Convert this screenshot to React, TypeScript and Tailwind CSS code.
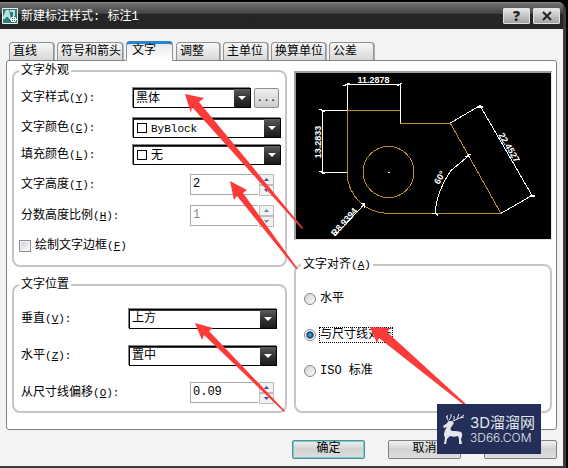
import { useState, type ReactNode } from "react";
import clsx from "clsx";

const TABS = [
  { label: "直线", width: "w-[45px]" },
  { label: "符号和箭头", width: "w-[66px]" },
  { label: "文字", width: "w-[47px]" },
  { label: "调整", width: "w-[44px]" },
  { label: "主单位", width: "w-[45px]" },
  { label: "换算单位", width: "w-[55px]" },
  { label: "公差", width: "w-[45px]" },
];

const ALIGNMENTS = ["水平", "与尺寸线对齐", "ISO 标准"];

function Mnemonic({ letter, colon = true }: { letter: string; colon?: boolean }) {
  return (
    <span className="text-[11px]">
      (<span className="underline">{letter}</span>){colon && ":"}
    </span>
  );
}

function Group({ title, className, children }: { title: ReactNode; className?: string; children: ReactNode }) {
  return (
    <fieldset className={clsx("min-w-0 rounded-lg border-2 border-[#c6c6c6]", className)}>
      <legend className="ml-[5px] px-[2px] leading-4">{title}</legend>
      {children}
    </fieldset>
  );
}

type RowProps = { id: string; text: string; letter: string; height: string; labelWidth: string; children: ReactNode };

function Row({ id, text, letter, height, labelWidth, children }: RowProps) {
  return (
    <div className={clsx("flex items-center pl-[7px] pr-1", height)}>
      <label htmlFor={id} className={clsx("shrink-0 whitespace-nowrap", labelWidth)}>
        {text}
        <Mnemonic letter={letter} />
      </label>
      {children}
    </div>
  );
}

function Combo({ id, options, swatch, className }: { id: string; options: string[]; swatch?: boolean; className?: string }) {
  return (
    <div
      className={clsx(
        "flex h-5 items-stretch border border-black bg-white shadow-[-1px_-1px_0_#80858a,inset_0_1px_0_#333]",
        className
      )}
    >
      {swatch && <span className="ml-[3px] h-[10px] w-[10px] shrink-0 self-center border border-black" />}
      <select
        id={id}
        className={clsx("min-w-0 flex-1 appearance-none bg-transparent pt-px outline-none", swatch ? "pl-1" : "pl-[2px]")}
      >
        {options.map((o) => (
          <option key={o}>{o}</option>
        ))}
      </select>
      <span className="flex w-4 shrink-0 items-center justify-center bg-linear-to-b from-[#5c5c5c] via-[#333] to-[#1c1c1c]">
        <svg width="8" height="4" viewBox="0 0 8 4">
          <path d="M0 0h8L4 4z" fill="#fff" />
        </svg>
      </span>
    </div>
  );
}

function Spinner({ id, initial, disabled }: { id: string; initial: string; disabled?: boolean }) {
  const [value, setValue] = useState(initial);
  const step = (d: number) => setValue((v) => String(Math.max(0, Number(v) + d)));
  const button = "flex h-[11px] w-[15px] items-center justify-center border border-[#bcbcbc] bg-[#f1f1f1]";
  const arrow = disabled ? "#7d8190" : "#3d4d8c";

  return (
    <div className="flex">
      <input
        id={id}
        value={value}
        disabled={disabled}
        onChange={(e) => setValue(e.target.value)}
        className="h-[21px] w-[68px] border border-r-0 border-[#a9a9a9] bg-white pb-px pl-[2px] text-[12px] outline-none disabled:text-[#8a8a8a]"
      />
      <div className="ml-px flex flex-col">
        <button type="button" aria-label="增加" disabled={disabled} onClick={() => step(1)} className={button}>
          <svg width="5" height="3" viewBox="0 0 5 3">
            <path d="M0 3h5L2.500 0z" fill={arrow} />
          </svg>
        </button>
        <button type="button" aria-label="减少" disabled={disabled} onClick={() => step(-1)} className={button}>
          <svg width="5" height="3" viewBox="0 0 5 3">
            <path d="M0 0h5L2.500 3z" fill={arrow} />
          </svg>
        </button>
      </div>
    </div>
  );
}

function Preview() {
  return (
    <div className="mt-2 border-2 border-r border-b border-[#9c9c9c] border-r-[#e4e4e4] border-b-[#e8dede] bg-black">
      <svg viewBox="296 73 254 166" className="block h-[166px] w-full" fill="none">
        {/* part outline */}
        <g stroke="#b8902c" shapeRendering="crispEdges">
          <path d="M346.500 172V110.500H399.500V123.500H450L500.500 213.500H388C365 213 347 196 346.500 172" />
          <circle cx="388" cy="172" r="25.500" />
        </g>
        {/* dimension lines */}
        <g stroke="#fff" shapeRendering="crispEdges">
          <path d="M346.500 110V84.500H399.500V123M346 110.500H321.500V172.500H346" />
          <path d="M343 86l6 -3M397 86l4 -3M319 109l5 3M319 171l5 3" strokeWidth="1.500" />
          <path d="M450 123L479.500 105.500L531.500 195.500L501 213" />
          <path d="M476 107h6M529 196h5" strokeWidth="2" />
          <path d="M468 156L450 171Q436 192 434.500 213M465 157l5 -3M468 154l1 4M431 213h5l1 3" />
          <path d="M334 236L364 204M361 203l3 1v4" />
          <path d="M387 172h2" />
        </g>
        <g
          fill="#fff"
          textAnchor="middle"
          className="[font-family:'Liberation_Sans',sans-serif] text-[9px] font-bold"
        >
          <text x="373" y="83">11.2878</text>
          <text transform="translate(320 142) rotate(-90)">13.2833</text>
          <text transform="translate(506 149) rotate(60)">22.4527</text>
          <text transform="translate(442 179) rotate(-60)">60°</text>
          <text transform="translate(346 224) rotate(-48)">R8.9394</text>
        </g>
      </svg>
    </div>
  );
}

function Arrows() {
  return (
    <svg className="pointer-events-none absolute top-0 left-0" width="568" height="468" viewBox="0 0 568 468">
      <g fill="#fb3b3a">
        <path d="M185 94L204 98L199 102L303 228L302 229L192 107L191 113Z" />
        <path d="M230 181L247 190L243 193L298 269L296 269L237 196L234 200Z" />
        <path d="M195 323L213 328L209 331L285 411L284 412L204 335L202 340Z" />
        <path d="M370 327L390 328L387 332L467 405L464 405L379 338L377 343Z" />
      </g>
    </svg>
  );
}

function Watermark() {
  return (
    <div className="absolute top-[404px] left-[437px] flex h-[50px] w-[104px] items-center gap-[5px] bg-[#232f59] pl-[5px] text-[#e4e6ec]">
      <svg width="23" height="32" viewBox="0 0 23 32">
        <path
          d="M1 13L4 11L6 9C6 8 7 8 9 8L12 10L10 13C8 15 8 17 10 18C14 18 17 18 19 19C21 21 20 24 19 26L20 31H17V26L16 23C13 24 11 24 8 23L5 26L4 31H2L3 25L2 22C2 19 3 17 5 14L2 15Z"
          fill="currentColor"
        />
        <path
          d="M8 9C5 7 4 4 6 2M6 5L4 3M7 7L9 4V1M9 9C13 7 17 6 22 2M12 7L12 3M15 6L17 1M18 5L22 4"
          fill="none"
          stroke="currentColor"
        />
      </svg>
      <div className="whitespace-nowrap [font-family:Inter,'Noto_Sans_CJK_SC',sans-serif]">
        <div className="text-[15px] leading-[17px]">3D溜溜网</div>
        <div className="text-[12px] leading-[13px] font-light">3D66.COM</div>
      </div>
    </div>
  );
}

export default function App() {
  const [tab, setTab] = useState("文字");
  const [alignment, setAlignment] = useState("与尺寸线对齐");

  const titleButton =
    "flex h-4 w-[27px] items-center justify-center rounded-[1px] border border-[#e2e2e2] bg-linear-to-b from-[#e6e6e6] to-[#a2a2a2]";
  const footerButton =
    "h-[19px] w-[73px] rounded-[2px] border bg-linear-to-b from-[#f0f0f0] via-[#d2d2d2] to-[#dedede] leading-[17px]";

  return (
    <div className="relative bg-black pt-[2px] pr-[2px] text-[12px] leading-4 text-black [font-family:'Liberation_Mono','Noto_Sans_CJK_SC',monospace]">
      <div className="rounded-t-lg rounded-l-none border-r-[3px] border-b-2 border-[#3c3c3c] bg-[#f3f3f3]">
        <header className="flex h-[27px] items-center rounded-tr-[5px] border-t border-[#8b8b8b] bg-linear-to-b from-[#707070] from-0% via-[#454545] via-40% to-[#252525] to-42% pr-[3px] pl-[2px] text-white">
          <svg width="16" height="16" viewBox="0 0 16 16" fill="none">
            <path d="M.5 .5h15v15H.5z" fill="#2c7d78" stroke="#e6f3f2" />
            <path d="M1 9l3-7h3l2 9H7L6 9H4l-1 2H1zM8 2h5v6h-2V4H8z" fill="#b9e2dc" />
            <path d="M11.500 8v6M8 11.500h7M9.500 9.500h4v4h-4z" stroke="#fff" />
          </svg>
          <h1 className="ml-[3px] flex-1 pt-px">新建标注样式: 标注1</h1>
          <div className="flex gap-[3px]">
            <button type="button" aria-label="帮助" className={titleButton}>
              <span className="font-sans text-[14px] leading-none font-black text-[#222]">?</span>
            </button>
            <button type="button" aria-label="关闭" className={titleButton}>
              <svg width="10" height="10" viewBox="0 0 10 10">
                <path d="M1 1l8 8M9 1L1 9" stroke="#222" strokeWidth="2" />
              </svg>
            </button>
          </div>
        </header>

        <main className="pt-3 pr-[6px] pb-[7px]">
          <div role="tablist" className="flex items-end gap-[3px] pl-[9px]">
            {TABS.map((t) => (
              <button
                key={t.label}
                type="button"
                role="tab"
                aria-selected={tab === t.label}
                onClick={() => setTab(t.label)}
                className={clsx(
                  "shrink-0 rounded-t-[4px] border text-left whitespace-nowrap",
                  t.width,
                  tab === t.label
                    ? "-mb-px h-5 border-t-[3px] border-[#8d9296] border-t-[#2a86cc] border-b-white bg-linear-to-b from-[#e8e8e8] to-white pb-[3px] pl-[5px] leading-3"
                    : "h-[18px] border-b-0 border-[#8d9296] bg-linear-to-b from-[#f8f8f8] to-[#d8d8d8] pl-[3px] shadow-[1px_0_0_#b0b0b0]"
                )}
              >
                {t.label}
              </button>
            ))}
          </div>

          <div className="ml-[6px] rounded-[3px] border border-[#7c838b] bg-white pt-[2px] pr-1 pb-4 pl-[5px]">
            <div className="grid grid-cols-[275px_1fr] gap-[7px]">
              <div className="flex flex-col gap-[10px]">
                <Group title="文字外观" className="pb-[2px]">
                  <div className="pt-1">
                    <Row id="style" text="文字样式" letter="Y" height="h-[30px]" labelWidth="w-28">
                      <Combo id="style" options={["黑体"]} className="w-[118px]" />
                      <button
                        type="button"
                        aria-label="浏览文字样式"
                        className="ml-[3px] h-5 w-[25px] rounded-[2px] border border-[#8e8e8e] bg-linear-to-b from-[#efefef] to-[#cdcdcd] text-[11px] leading-none"
                      >
                        ...
                      </button>
                    </Row>
                    <Row id="color" text="文字颜色" letter="C" height="h-[30px]" labelWidth="w-28">
                      <Combo id="color" options={["ByBlock"]} swatch className="flex-1 text-[11px]" />
                    </Row>
                    <Row id="fill" text="填充颜色" letter="L" height="h-6" labelWidth="w-28">
                      <Combo id="fill" options={["无"]} swatch className="flex-1" />
                    </Row>
                    <Row id="height" text="文字高度" letter="T" height="h-9" labelWidth="w-[169px]">
                      <Spinner id="height" initial="2" />
                    </Row>
                    <Row id="fraction" text="分数高度比例" letter="H" height="h-[26px]" labelWidth="w-[169px]">
                      <Spinner id="fraction" initial="1" disabled />
                    </Row>
                    <label className="flex h-[34px] items-center gap-1 pl-[5px]">
                      <input
                        type="checkbox"
                        className="h-3 w-3 appearance-none border border-[#8a8f94] bg-linear-to-br from-[#c9cdd1] to-white shadow-[inset_0_0_0_1px_#f4f4f4] checked:bg-[#2a6a9c]"
                      />
                      <span>
                        绘制文字边框
                        <Mnemonic letter="F" colon={false} />
                      </span>
                    </label>
                  </div>
                </Group>

                <Group title="文字位置">
                  <div className="pt-[7px]">
                    <Row id="vertical" text="垂直" letter="V" height="h-[37px]" labelWidth="w-[108px]">
                      <Combo id="vertical" options={["上方", "居中", "外部", "下方"]} className="w-[148px]" />
                    </Row>
                    <Row id="horizontal" text="水平" letter="Z" height="h-[37px]" labelWidth="w-[108px]">
                      <Combo id="horizontal" options={["置中"]} className="w-[148px]" />
                    </Row>
                    <Row id="offset" text="从尺寸线偏移" letter="O" height="h-[37px]" labelWidth="w-[169px]">
                      <Spinner id="offset" initial="0.09" />
                    </Row>
                  </div>
                </Group>
              </div>

              <div className="flex min-w-0 flex-col">
                <Preview />
                <Group
                  title={
                    <>
                      文字对齐
                      <Mnemonic letter="A" colon={false} />
                    </>
                  }
                  className="mt-[17px] flex-1"
                >
                  <div className="pt-2 pl-2">
                    {ALIGNMENTS.map((a) => (
                      <label key={a} className="flex h-9 items-center gap-1">
                        <input
                          type="radio"
                          name="alignment"
                          checked={alignment === a}
                          onChange={() => setAlignment(a)}
                          className="h-3 w-3 appearance-none rounded-full border border-[#858585] bg-linear-to-br from-[#cfcfcf] to-white checked:bg-radial checked:from-[#3f9fd0] checked:from-10% checked:via-[#14406c] checked:via-45% checked:to-white checked:to-60%"
                        />
                        <span
                          className={clsx("leading-[14px]", alignment === a && "outline-1 outline-black outline-dotted")}
                        >
                          {a}
                        </span>
                      </label>
                    ))}
                  </div>
                </Group>
              </div>
            </div>
          </div>

          <footer className="flex justify-end gap-[23px] pt-[10px]">
            <button type="button" className={clsx(footerButton, "border-[#5a8a90] shadow-[inset_0_0_0_1px_#6fd0d8]")}>
              确定
            </button>
            <button type="button" className={clsx(footerButton, "border-[#808080]")}>
              取消
            </button>
            <button type="button" className={clsx(footerButton, "border-[#808080]")}>
              帮助
              <Mnemonic letter="H" colon={false} />
            </button>
          </footer>
        </main>
      </div>

      <Arrows />
      <Watermark />
    </div>
  );
}
